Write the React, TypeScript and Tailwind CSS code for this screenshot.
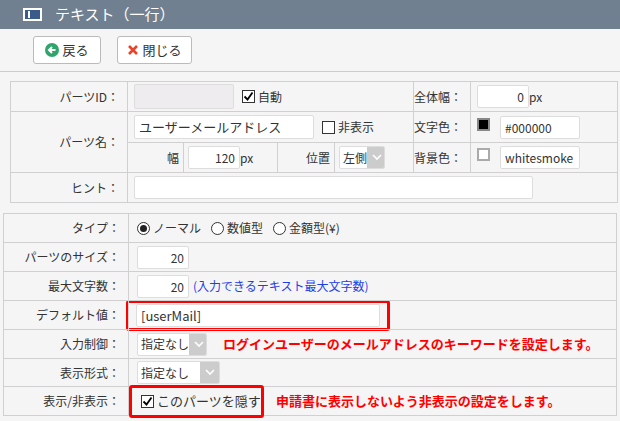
import React from "react";

const F = { fontFamily: '"Noto Sans CJK JP", "Noto Sans", sans-serif' };
const td = "border border-[#d0d0d0] px-1 py-0 leading-[16px]";
const lab = "border border-[#d0d0d0] text-right pr-2 text-[12px] text-[#333] py-0 leading-[16px]";
const inp = "h-[23px] bg-white border border-[#ddd] rounded-[2px] text-[12px] px-1 leading-[21px] whitespace-nowrap overflow-hidden";

function Sel({ w, label }: { w: number; label: string }) {
  return (
    <div className="flex items-center h-[23px] bg-white border border-[#ddd] rounded-[2px] text-[12px] pl-[3px] whitespace-nowrap overflow-hidden" style={{ width: w }}>
      <span className="flex-1 whitespace-nowrap">{label}</span>
      <span className="w-[19px] h-[21px] shrink-0 bg-[#ccc] flex items-center justify-center">
        <svg width="10" height="7" viewBox="0 0 10 7"><path d="M1 1l4 4 4-4" stroke="#fff" strokeWidth="1.6" fill="none" /></svg>
      </span>
    </div>
  );
}

function Chk({ on }: { on?: boolean }) {
  return (
    <span className="inline-flex w-[13px] h-[13px] border border-[#333] bg-white items-center justify-center mr-[3px]">
      {on && <svg width="11" height="11" viewBox="0 0 11 11"><path d="M1.5 5.5l3 3 5-7" stroke="#000" strokeWidth="1.8" fill="none" /></svg>}
    </span>
  );
}

function Radio({ on }: { on?: boolean }) {
  return (
    <span className="inline-flex w-[13px] h-[13px] rounded-full border border-[#333] bg-white items-center justify-center mr-[3px]">
      {on && <span className="w-[7px] h-[7px] rounded-full bg-[#222]" />}
    </span>
  );
}

export default function App() {
  return (
    <div className="w-[620px] h-[421px] bg-[#f5f5f5] text-[#333] overflow-hidden" style={F}>
      <div className="h-[29px] bg-[#708090] flex items-center pl-[23px] text-white text-[15px] gap-[13px]">
        <span className="w-[19px] h-[13px] border-2 border-white bg-[#3b5b8a] flex items-center pl-[3px]"><span className="w-[2px] h-[7px] bg-white" /></span>
        <span>テキスト（一行）</span>
      </div>
      <div className="h-[43px] flex items-center gap-[16px] pl-[33px] border-b border-[#ccc]">
        <button className="h-[28px] w-[68px] bg-white border border-[#bbb] rounded-[3px] flex items-center justify-center gap-[3px] text-[13px]">
          <svg width="14" height="14" viewBox="0 0 14 14"><circle cx="7" cy="7" r="7" fill="#2fa56b" /><path d="M10.5 7H4M7 4L4 7l3 3" stroke="#fff" strokeWidth="2" fill="none" /></svg>
          戻る
        </button>
        <button className="h-[28px] w-[75px] bg-white border border-[#bbb] rounded-[3px] flex items-center justify-center gap-[3px] text-[13px]">
          <svg width="12" height="12" viewBox="0 0 12 12"><path d="M2 2l8 8M10 2l-8 8" stroke="#e8442a" strokeWidth="2.6" /></svg>
          閉じる
        </button>
      </div>
      <div className="pt-[9px] pl-[10px]">
        <table className="border-collapse w-[607px] table-fixed">
          <colgroup>
            <col style={{ width: 117 }} /><col style={{ width: 56 }} /><col style={{ width: 94 }} /><col style={{ width: 57 }} /><col style={{ width: 79 }} /><col style={{ width: 57 }} /><col style={{ width: 147 }} />
          </colgroup>
          <tbody className="text-[12px]">
            <tr className="h-[30px]">
              <td className={lab}>パーツID：</td>
              <td className={td + " pl-[6px]"} colSpan={4}>
                <div className="flex items-center">
                  <div className="w-[100px] h-[25px] bg-[#eeecee] border border-[#ddd] rounded-[2px]" />
                  <span className="ml-[8px] flex items-center"><Chk on />自動</span>
                </div>
              </td>
              <td className={lab}>全体幅：</td>
              <td className={td + " pl-[6px]"}><div className="flex items-center"><div className={inp + " w-[52px] text-right"}>0</div><span>px</span></div></td>
            </tr>
            <tr className="h-[31px]">
              <td className={lab} rowSpan={2}>パーツ名：</td>
              <td className={td + " pl-[6px]"} colSpan={4}>
                <div className="flex items-center">
                  <div className={inp + " w-[180px] h-[24px] text-[13px]"}>ユーザーメールアドレス</div>
                  <span className="ml-[8px] flex items-center"><Chk />非表示</span>
                </div>
              </td>
              <td className={lab}>文字色：</td>
              <td className={td + " pl-[6px]"}><div className="flex items-center gap-[10px]"><span className="w-[13px] h-[13px] border-2 border-[#888] bg-black -mt-[6px]" /><div className={inp + " w-[80px]"}>#000000</div></div></td>
            </tr>
            <tr className="h-[30px]">
              <td className={lab + " pr-[4px]"}>幅</td>
              <td className={td}><div className="flex items-center"><div className={inp + " w-[52px] text-right"}>120</div><span>px</span></div></td>
              <td className={lab + " pr-[4px]"}>位置</td>
              <td className={td}><Sel w={46} label="左側" /></td>
              <td className={lab}>背景色：</td>
              <td className={td + " pl-[6px]"}><div className="flex items-center gap-[10px]"><span className="w-[13px] h-[13px] border-2 border-[#aaa] bg-white -mt-[6px]" /><div className={inp + " w-[80px]"}>whitesmoke</div></div></td>
            </tr>
            <tr className="h-[30px]">
              <td className={lab}>ヒント：</td>
              <td className={td + " pl-[6px]"} colSpan={6}><div className={inp + " w-[399px]"} /></td>
            </tr>
          </tbody>
        </table>
      </div>
      <div className="pt-[10px] pl-[3px]">
        <table className="border-collapse w-[614px] table-fixed text-[12px]">
          <colgroup><col style={{ width: 125 }} /><col /></colgroup>
          <tbody>
            <tr className="h-[29px]">
              <td className={lab}>タイプ：</td>
              <td className={td + " pl-[8px]"}><div className="flex items-center gap-[10px]"><span className="flex items-center"><Radio on />ノーマル</span><span className="flex items-center"><Radio />数値型</span><span className="flex items-center"><Radio />金額型(¥)</span></div></td>
            </tr>
            <tr className="h-[29px]">
              <td className={lab}>パーツのサイズ：</td>
              <td className={td + " pl-[8px]"}><div className={inp + " w-[52px] text-right"}>20</div></td>
            </tr>
            <tr className="h-[29px]">
              <td className={lab}>最大文字数：</td>
              <td className={td + " pl-[8px]"}><div className="flex items-center gap-[4px]"><div className={inp + " w-[52px] text-right"}>20</div><span className="text-[#1e3ee8]">(入力できるテキスト最大文字数)</span></div></td>
            </tr>
            <tr className="h-[29px]">
              <td className={lab}>デフォルト値：</td>
              <td className={td + " pl-[0px]"}>
                <div className="w-[264px] h-[31px] -my-[2px] border-[3px] border-[#f00] rounded-[3px] flex items-center pl-[7px] -ml-[3px]">
                  <div className={inp + " w-[244px] text-[13px]"}>[userMail]</div>
                </div>
              </td>
            </tr>
            <tr className="h-[29px]">
              <td className={lab}>入力制御：</td>
              <td className={td + " pl-[8px]"}><div className="flex items-center gap-[16px]"><Sel w={70} label="指定なし" /><span className="text-[#f00] font-bold text-[13px]">ログインユーザーのメールアドレスのキーワードを設定します。</span></div></td>
            </tr>
            <tr className="h-[28px]">
              <td className={lab}>表示形式：</td>
              <td className={td + " pl-[8px]"}><Sel w={83} label="指定なし" /></td>
            </tr>
            <tr className="h-[29px]">
              <td className={lab}>表示/非表示：</td>
              <td className={td + " pl-[0px]"}>
                <div className="flex items-center gap-[12px]">
                  <div className="w-[135px] h-[33px] -my-[3px] border-[3px] border-[#f00] rounded-[3px] flex items-center pl-[9px] text-[13px]"><Chk on />このパーツを隠す</div>
                  <span className="text-[#f00] font-bold text-[13px]">申請書に表示しないよう非表示の設定をします。</span>
                </div>
              </td>
            </tr>
          </tbody>
        </table>
      </div>
    </div>
  );
}
